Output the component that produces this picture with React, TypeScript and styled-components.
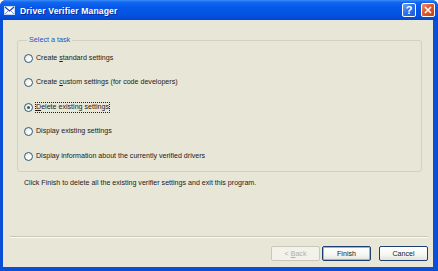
import React from "react";
import styled, { createGlobalStyle } from "styled-components";

const Global = createGlobalStyle`
  html, body { margin: 0; padding: 0; background: #fff; }
  body { font-family: "Liberation Sans", Arial, sans-serif; }
`;

const Window = styled.div`
  width: 438px;
  height: 271px;
  display: flex;
  flex-direction: column;
  background: #0a4fd6;
  border-radius: 6px 6px 0 0;
  overflow: hidden;
  box-sizing: border-box;
`;

const TitleBar = styled.div`
  height: 20px;
  flex: none;
  display: flex;
  align-items: center;
  padding: 0 3px 0 4px;
  gap: 5px;
  background: linear-gradient(
    to bottom,
    #3c8cf6 0%,
    #1166ee 12%,
    #0558e8 40%,
    #0452e0 75%,
    #0346cf 100%
  );
`;

const TitleText = styled.span`
  flex: 1;
  color: #fff;
  font-family: "Liberation Sans", Arial, sans-serif;
  font-weight: bold;
  font-size: 8.6px;
  letter-spacing: 0.15px;
  text-shadow: 1px 1px 0 #0a2a90;
  padding-top: 1px;
`;

const CaptionButton = styled.div<{ $variant: "help" | "close" }>`
  width: 14px;
  height: 14px;
  box-sizing: border-box;
  border: 1px solid #fff;
  border-radius: 2px;
  display: flex;
  align-items: center;
  justify-content: center;
  color: #fff;
  font-weight: bold;
  font-size: 11px;
  font-family: "Liberation Sans", Arial, sans-serif;
  background: ${(p) =>
    p.$variant === "close"
      ? "linear-gradient(135deg, #f09070 0%, #e0582c 45%, #c8401c 100%)"
      : "linear-gradient(135deg, #6ea4f8 0%, #2c6ef0 50%, #1c58dc 100%)"};
`;

const Client = styled.div`
  flex: 1;
  margin: 0 5px 4px 3px;
  background: #e8e7d7;
  display: flex;
  flex-direction: column;
  box-sizing: border-box;
  padding: 0 5px 6px 7px;
`;

const GroupBox = styled.fieldset`
  margin: 15px 6px 0 7px;
  padding: 7px 6px 9px 6px;
  border: 1px solid #d2d0c0;
  border-radius: 3px;
  display: flex;
  flex-direction: column;
  gap: 12.5px;
  min-width: 0;
`;

const Legend = styled.legend`
  color: #1f4fd0;
  font-size: 7.2px;
  line-height: 10px;
  padding: 0 2px;
  margin-left: 3px;
`;

const Row = styled.label`
  display: flex;
  align-items: center;
  height: 12px;
  gap: 2px;
  font-size: 7.1px;
  color: #1a1a1a;
`;

const Radio = styled.span<{ $checked?: boolean }>`
  width: 9px;
  height: 9px;
  box-sizing: border-box;
  border-radius: 50%;
  border: 1px solid #2a5a86;
  background: radial-gradient(circle at 65% 65%, #ffffff 0%, #f4f4ee 50%, #dcdcd2 100%);
  display: flex;
  align-items: center;
  justify-content: center;
  flex: none;
  &::after {
    content: "";
    display: ${(p) => (p.$checked ? "block" : "none")};
    width: 3px;
    height: 3px;
    border-radius: 50%;
    background: #2c6a3a;
  }
`;

const LabelText = styled.span<{ $focus?: boolean }>`
  padding: 0 1px;
  outline: ${(p) => (p.$focus ? "1px dotted #222" : "none")};
  outline-offset: -1px;
  line-height: 11px;
`;

const Hint = styled.div`
  margin: 6px 0 0 14px;
  font-size: 7.1px;
  line-height: 10px;
  color: #1a1a1a;
`;

const Spacer = styled.div`
  flex: 1;
`;

const Separator = styled.div`
  height: 1px;
  background: #c9c7b8;
  border-bottom: 1px solid #fbfbf6;
  margin-bottom: 8px;
`;

const ButtonRow = styled.div`
  display: flex;
  justify-content: flex-end;
  align-items: center;
`;

const Button = styled.div<{ $disabled?: boolean; $default?: boolean; $gapLeft?: number }>`
  width: 49px;
  height: 15px;
  box-sizing: border-box;
  margin-left: ${(p) => p.$gapLeft ?? 0}px;
  border: 1px solid ${(p) => (p.$disabled ? "#c9c7ba" : "#1c3f74")};
  border-radius: 2px;
  background: ${(p) =>
    p.$disabled
      ? "#f3f2ea"
      : "linear-gradient(to bottom, #ffffff 0%, #f6f6f2 60%, #e4e2d8 100%)"};
  box-shadow: ${(p) =>
    p.$default ? "inset 0 0 0 1px #8fb3ec" : "none"};
  color: ${(p) => (p.$disabled ? "#b0ae9e" : "#1a1a1a")};
  font-size: 7.1px;
  display: flex;
  align-items: center;
  justify-content: center;
  white-space: pre;
`;

const U = styled.span`
  text-decoration: underline;
`;

function TitleIcon() {
  return (
    <svg width="11" height="10" viewBox="0 0 11 10">
      <rect x="0.5" y="1.5" width="10" height="8" fill="#fff" stroke="#c8d8f8" />
      <path d="M1 2 L5.5 6 L10 2" stroke="#1440b0" strokeWidth="1.2" fill="none" />
      <path d="M1 9 L4 6 M10 9 L7 6" stroke="#4a78d8" strokeWidth="0.8" fill="none" />
    </svg>
  );
}

export default function App() {
  return (
    <>
      <Global />
      <Window>
        <TitleBar>
          <TitleIcon />
          <TitleText>Driver Verifier Manager</TitleText>
          <CaptionButton $variant="help">?</CaptionButton>
          <CaptionButton $variant="close">
            <svg width="8" height="8" viewBox="0 0 8 8">
              <path d="M1 1 L7 7 M7 1 L1 7" stroke="#fff" strokeWidth="1.6" />
            </svg>
          </CaptionButton>
        </TitleBar>
        <Client>
          <GroupBox>
            <Legend>Select a task</Legend>
            <Row>
              <Radio />
              <LabelText>
                Create <U>s</U>tandard settings
              </LabelText>
            </Row>
            <Row>
              <Radio />
              <LabelText>
                Create <U>c</U>ustom settings (for code developers)
              </LabelText>
            </Row>
            <Row>
              <Radio $checked />
              <LabelText $focus>
                <U>D</U>elete existing settings
              </LabelText>
            </Row>
            <Row>
              <Radio />
              <LabelText>Display existing settings</LabelText>
            </Row>
            <Row>
              <Radio />
              <LabelText>Display information about the currently verified drivers</LabelText>
            </Row>
          </GroupBox>
          <Hint>Click Finish to delete all the existing verifier settings and exit this program.</Hint>
          <Spacer />
          <Separator />
          <ButtonRow>
            <Button $disabled>
              {"< "}
              <U>B</U>ack
            </Button>
            <Button $default $gapLeft={2}>
              Finish
            </Button>
            <Button $gapLeft={8}>Cancel</Button>
          </ButtonRow>
        </Client>
      </Window>
    </>
  );
}
